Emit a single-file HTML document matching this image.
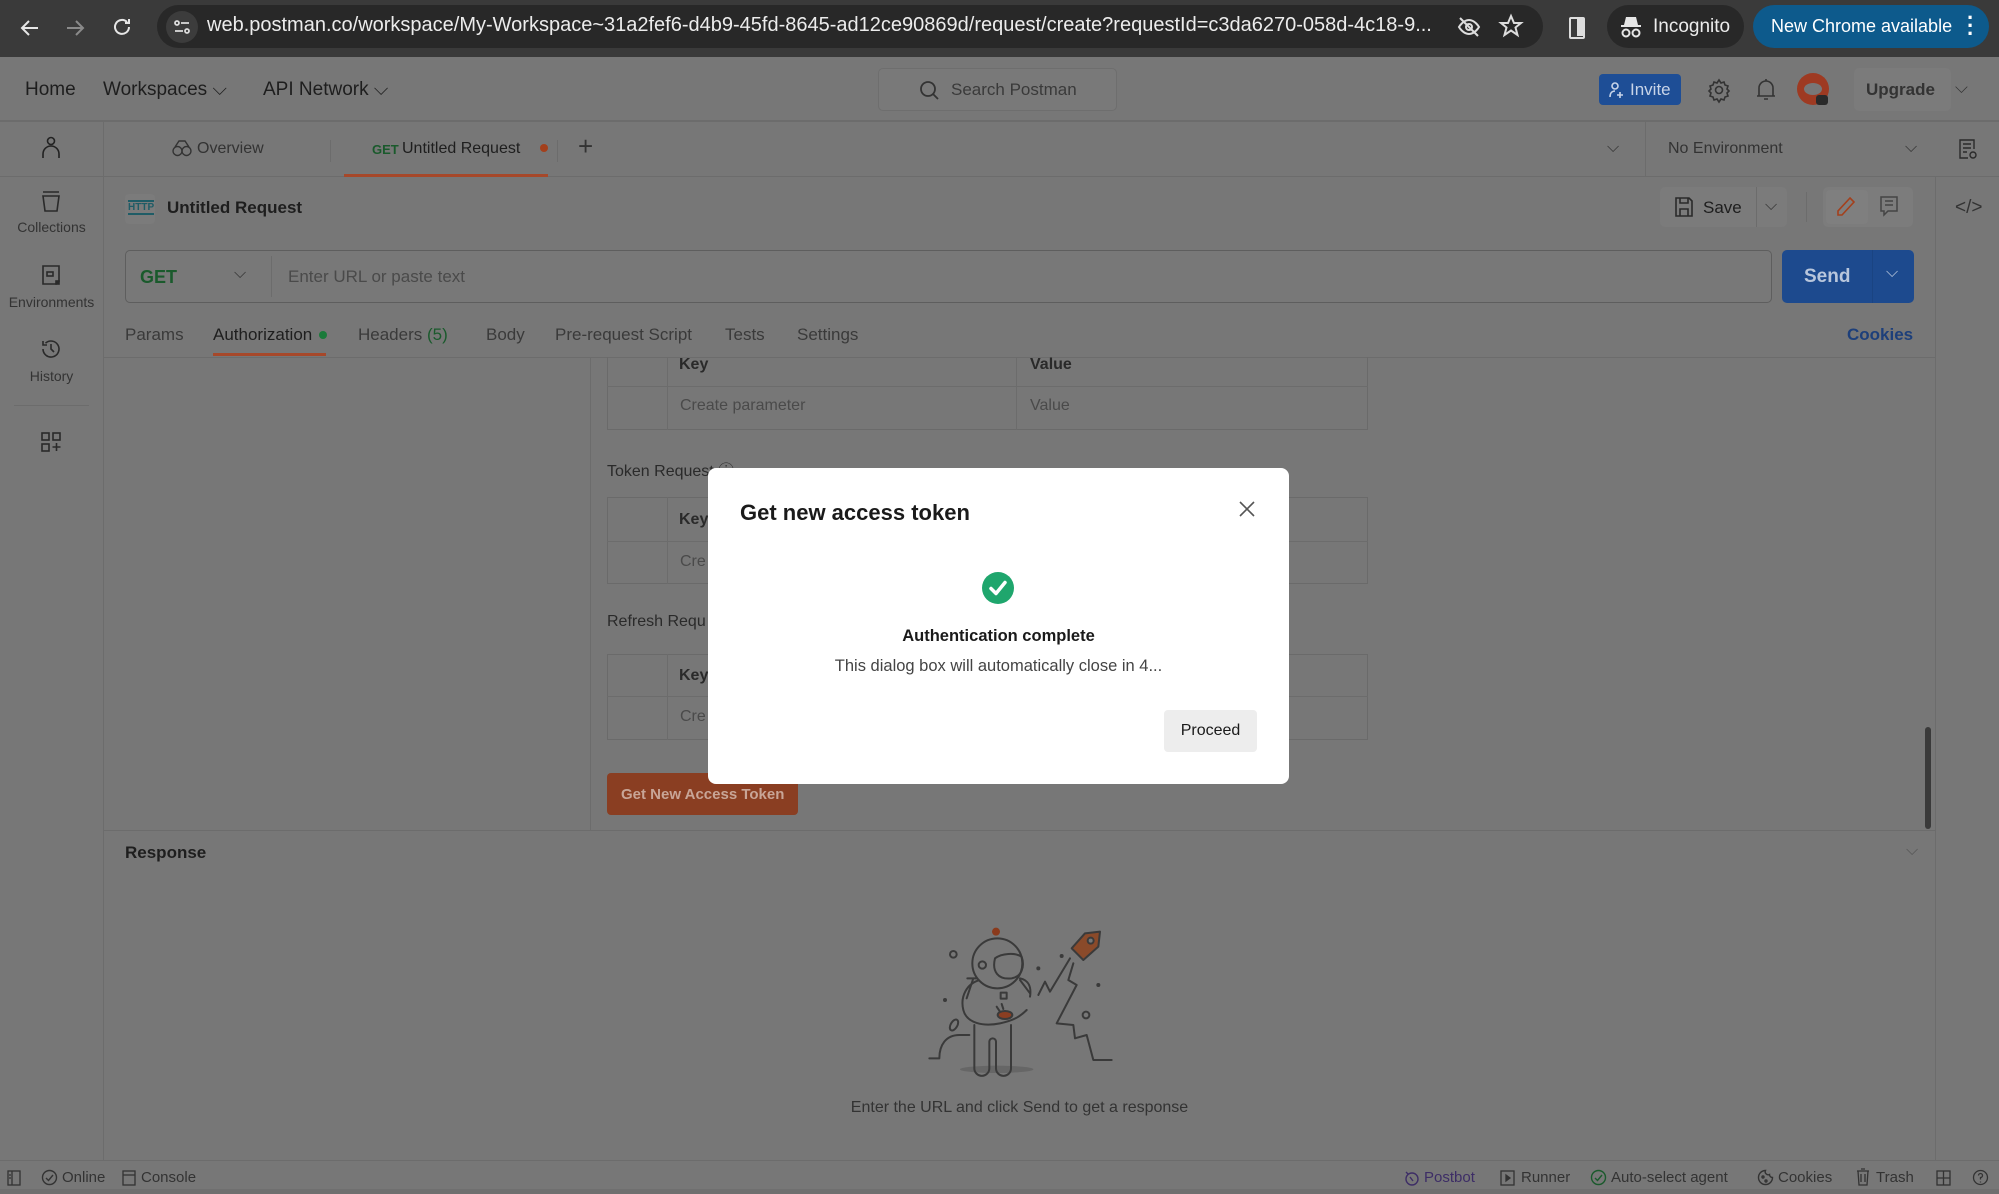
<!DOCTYPE html>
<html><head><meta charset="utf-8"><style>
*{box-sizing:border-box;margin:0;padding:0}
body{width:1999px;height:1194px;overflow:hidden;background:#777;font-family:"Liberation Sans",Arial,sans-serif;position:relative;color:#1e1e1e}
.a{position:absolute;white-space:nowrap}
.ln{position:absolute;background:#6c6c6c}
svg{position:absolute;overflow:visible}
.t{font-size:17px;color:#3a3a3a}
</style></head><body>
<!-- chrome bar -->
<div class="a" style="left:0;top:0;width:1999px;height:57px;background:#3a3a3a"></div>
<svg style="left:18px;top:16px" width="24" height="24" viewBox="0 0 24 24" fill="none" stroke="#e6e6e6" stroke-width="2"><path d="M20 12H5M11 5l-7 7 7 7"/></svg>
<svg style="left:63px;top:16px" width="24" height="24" viewBox="0 0 24 24" fill="none" stroke="#8a8a8a" stroke-width="2"><path d="M4 12h15M13 5l7 7-7 7"/></svg>
<svg style="left:110px;top:15px" width="24" height="24" viewBox="0 0 24 24" fill="none" stroke="#e6e6e6" stroke-width="2"><path d="M19 12a7 7 0 1 1-2-5M19 4v4h-4"/></svg>
<div class="a" style="left:157px;top:5px;width:1386px;height:43px;border-radius:22px;background:#282828"></div>
<div class="a" style="left:166px;top:11px;width:32px;height:32px;border-radius:16px;background:#3c3c3c"></div>
<svg style="left:173px;top:18px" width="18" height="18" viewBox="0 0 18 18" fill="none" stroke="#ddd" stroke-width="1.8"><circle cx="4" cy="5" r="2"/><path d="M8 5h8M2 13h8"/><circle cx="14" cy="13" r="2"/></svg>
<div class="a" style="left:207px;top:14px;font-size:20px;color:#ececec">web.postman.co/workspace/My-Workspace~31a2fef6-d4b9-45fd-8645-ad12ce90869d/request/create?requestId=c3da6270-058d-4c18-9...</div>
<svg style="left:1457px;top:15px" width="24" height="24" viewBox="0 0 24 24" fill="none" stroke="#ddd" stroke-width="2"><path d="M2 12s4-7 10-7 10 7 10 7-4 7-10 7S2 12 2 12z"/><circle cx="12" cy="12" r="3"/><path d="M3 3l18 18"/></svg>
<svg style="left:1499px;top:14px" width="24" height="24" viewBox="0 0 24 24" fill="none" stroke="#ddd" stroke-width="2"><path d="M12 2l3 7h7l-5.5 4.5 2 7.5-6.5-4.5-6.5 4.5 2-7.5L2 9h7z"/></svg>
<div class="a" style="left:1569px;top:17px;width:16px;height:22px;border:2.5px solid #ddd;border-radius:2px"><div style="position:absolute;right:0;top:0;width:6px;height:17px;background:#ddd"></div></div>
<div class="a" style="left:1607px;top:5px;width:137px;height:43px;border-radius:22px;background:#282828"></div>
<svg style="left:1620px;top:15px" width="22" height="24" viewBox="0 0 22 24" fill="#e6e6e6"><path d="M6 2h10l2 8H4z"/><rect x="1" y="10" width="20" height="2"/><circle cx="6" cy="18" r="3.5" fill="none" stroke="#e6e6e6" stroke-width="2"/><circle cx="16" cy="18" r="3.5" fill="none" stroke="#e6e6e6" stroke-width="2"/></svg>
<div class="a" style="left:1653px;top:16px;font-size:19px;color:#ececec">Incognito</div>
<div class="a" style="left:1753px;top:5px;width:236px;height:43px;border-radius:22px;background:#0d5a8c"></div>
<div class="a" style="left:1771px;top:16px;font-size:18px;color:#fff">New Chrome available</div>
<div class="a" style="left:1967px;top:14px;font-size:22px;color:#fff;font-weight:bold;line-height:8px;width:4px">·<br>·<br>·</div>

<!-- postman header -->
<div class="ln" style="left:0;top:120px;width:1999px;height:2px"></div>
<div class="a" style="left:25px;top:79px;font-size:19px;color:#1e1e1e">Home</div>
<div class="a" style="left:103px;top:79px;font-size:19px;color:#1e1e1e">Workspaces ⌵</div>
<div class="a" style="left:263px;top:79px;font-size:19px;color:#1e1e1e">API Network ⌵</div>
<div class="a" style="left:878px;top:68px;width:239px;height:43px;border:1px solid #6e6e6e;border-radius:5px;background:#797979"></div>
<svg style="left:918px;top:79px" width="22" height="22" viewBox="0 0 22 22" fill="none" stroke="#333" stroke-width="1.8"><circle cx="10" cy="10" r="7"/><path d="M15 15l5 5"/></svg>
<div class="a" style="left:951px;top:80px;font-size:17px;color:#3a3a3a">Search Postman</div>
<div class="a" style="left:1599px;top:74px;width:82px;height:31px;border-radius:4px;background:#1e4e96"></div>
<svg style="left:1608px;top:81px" width="18" height="18" viewBox="0 0 18 18" fill="none" stroke="#c8d4e8" stroke-width="1.6"><circle cx="7" cy="5" r="3"/><path d="M2 16c0-4 2-6 5-6M12 11v6M9 14h6"/></svg>
<div class="a" style="left:1630px;top:80px;font-size:17px;color:#c8d4e8">Invite</div>
<svg style="left:1707px;top:78px" width="24" height="24" viewBox="0 0 24 24" fill="none" stroke="#333" stroke-width="1.6"><circle cx="12" cy="12" r="3.5"/><path d="M12 2l2 3 3-1 1 3 3 1-1 3 2 2-2 2 1 3-3 1-1 3-3-1-2 3-2-3-3 1-1-3-3-1 1-3-2-2 2-2-1-3 3-1 1-3 3 1z"/></svg>
<svg style="left:1755px;top:78px" width="22" height="24" viewBox="0 0 22 24" fill="none" stroke="#333" stroke-width="1.6"><path d="M4 18V10a7 7 0 0 1 14 0v8H4zM2 18h18M9 21h4M11 3V1"/></svg>
<div class="a" style="left:1797px;top:73px;width:32px;height:32px;border-radius:16px;background:#9e3a22"></div>
<div class="a" style="left:1804px;top:83px;width:18px;height:12px;border-radius:50%;background:#777"></div>
<div class="a" style="left:1816px;top:95px;width:12px;height:10px;border-radius:3px;background:#2a2a2a"></div>
<div class="a" style="left:1854px;top:68px;width:97px;height:43px;border-radius:5px;background:#7b7b7b"></div>
<div class="a" style="left:1866px;top:80px;font-size:17px;color:#333;font-weight:bold">Upgrade</div>
<div class="a" style="left:1955px;top:78px;font-size:17px;color:#333">⌵</div>

<!-- sidebar -->
<div class="ln" style="left:103px;top:122px;width:1px;height:1038px"></div>
<svg style="left:40px;top:136px" width="22" height="24" viewBox="0 0 22 24" fill="none" stroke="#222" stroke-width="1.6"><circle cx="11" cy="5" r="3.5"/><path d="M3 22v-4a8 8 0 0 1 16 0v4"/></svg>
<div class="ln" style="left:0;top:176px;width:103px;height:1px"></div>
<svg style="left:40px;top:190px" width="22" height="24" viewBox="0 0 22 24" fill="none" stroke="#2a2a2a" stroke-width="1.6"><path d="M3 2h16M3 6h16l-2 15H5z"/></svg>
<div class="a" style="left:0;top:219px;width:103px;text-align:center;font-size:14px;color:#333">Collections</div>
<svg style="left:41px;top:264px" width="20" height="22" viewBox="0 0 20 22" fill="none" stroke="#2a2a2a" stroke-width="1.6"><path d="M16 20H2V2h16v16"/><rect x="6" y="8" width="6" height="4"/><rect x="15" y="17" width="3" height="3" fill="#2a2a2a"/></svg>
<div class="a" style="left:0;top:294px;width:103px;text-align:center;font-size:14px;color:#333">Environments</div>
<svg style="left:40px;top:338px" width="22" height="22" viewBox="0 0 22 22" fill="none" stroke="#2a2a2a" stroke-width="1.6"><path d="M3 11a8 8 0 1 0 2.5-5.8M3 3v4h4M11 6v5l3 3"/></svg>
<div class="a" style="left:0;top:368px;width:103px;text-align:center;font-size:14px;color:#333">History</div>
<div class="ln" style="left:14px;top:405px;width:75px;height:1px"></div>
<svg style="left:41px;top:432px" width="20" height="20" viewBox="0 0 20 20" fill="none" stroke="#2a2a2a" stroke-width="1.6"><rect x="1" y="1" width="7" height="7"/><rect x="12" y="1" width="7" height="7"/><rect x="1" y="12" width="7" height="7"/><path d="M15.5 11v8M11.5 15h8"/></svg>

<!-- tabs row -->
<div class="ln" style="left:103px;top:176px;width:1896px;height:1px"></div>
<svg style="left:172px;top:139px" width="20" height="18" viewBox="0 0 20 18" fill="none" stroke="#333" stroke-width="1.4"><circle cx="5.5" cy="12" r="4.5"/><circle cx="14.5" cy="12" r="4.5"/><path d="M3 8l4-6h6l4 6"/></svg>
<div class="a" style="left:197px;top:140px;font-size:16px;color:#333">Overview</div>
<div class="ln" style="left:330px;top:140px;width:1px;height:22px"></div>
<div class="a" style="left:372px;top:142px;font-size:13px;color:#1a5a2c;font-weight:bold">GET</div>
<div class="a" style="left:402px;top:140px;font-size:16px;color:#1e1e1e">Untitled Request</div>
<div class="a" style="left:540px;top:144px;width:8px;height:8px;border-radius:4px;background:#a3401c"></div>
<div class="ln" style="left:557px;top:140px;width:1px;height:22px"></div>
<div class="a" style="left:578px;top:131px;font-size:26px;color:#333;font-weight:300">+</div>
<div class="a" style="left:344px;top:174px;width:204px;height:3px;background:#a6482a"></div>
<div class="a" style="left:1607px;top:139px;font-size:16px;color:#333">⌵</div>
<div class="ln" style="left:1645px;top:122px;width:1px;height:54px"></div>
<div class="a" style="left:1668px;top:140px;font-size:16px;color:#333">No Environment</div>
<div class="a" style="left:1905px;top:139px;font-size:16px;color:#333">⌵</div>
<svg style="left:1958px;top:138px" width="20" height="22" viewBox="0 0 20 22" fill="none" stroke="#2a2a2a" stroke-width="1.4"><path d="M10 20H2V2h14v9M5 6h8M5 10h8M5 14h4"/><circle cx="15" cy="17" r="3"/></svg>

<!-- right panel divider -->
<div class="ln" style="left:1935px;top:176px;width:1px;height:984px"></div>
<div class="a" style="left:1955px;top:197px;font-size:19px;color:#333">&lt;/&gt;</div>

<!-- request name -->
<div class="a" style="left:125px;top:194px;width:30px;height:30px;border-radius:4px;background:#7b7b7b"></div>
<div class="a" style="left:128px;top:200px;font-size:10px;color:#1f5c66;font-weight:bold;border-top:2px solid #1f5c66;border-bottom:2px solid #1f5c66;line-height:11px">HTTP</div>
<div class="a" style="left:167px;top:198px;font-size:17px;color:#1e1e1e;font-weight:bold">Untitled Request</div>
<div class="a" style="left:1660px;top:187px;width:127px;height:40px;border-radius:5px;background:#7b7b7b"></div>
<div class="ln" style="left:1756px;top:187px;width:1px;height:40px"></div>
<svg style="left:1674px;top:196px" width="20" height="22" viewBox="0 0 20 22" fill="none" stroke="#2a2a2a" stroke-width="1.6"><path d="M2 2h13l3 3v15H2zM6 2v5h8V2M6 20v-7h8v7"/></svg>
<div class="a" style="left:1703px;top:198px;font-size:17px;color:#1e1e1e">Save</div>
<div class="a" style="left:1765px;top:197px;font-size:16px;color:#333">⌵</div>
<div class="ln" style="left:1806px;top:192px;width:1px;height:30px"></div>
<div class="a" style="left:1823px;top:187px;width:90px;height:40px;border-radius:5px;background:#7c7c7c"></div>
<div class="a" style="left:1826px;top:190px;width:42px;height:34px;border-radius:4px;background:#7f7f7f"></div>
<svg style="left:1836px;top:196px" width="20" height="22" viewBox="0 0 20 22" fill="none" stroke="#a3401c" stroke-width="1.6"><path d="M14 2l4 4L6 19H2v-4z"/></svg>
<svg style="left:1880px;top:196px" width="18" height="22" viewBox="0 0 18 22" fill="none" stroke="#444" stroke-width="1.5"><path d="M1 1h16v14H8l-4 4v-4H1zM5 5h8M5 9h8"/></svg>

<!-- url bar -->
<div class="a" style="left:125px;top:250px;width:1647px;height:53px;border:1.5px solid #5e5e5e;border-radius:5px;background:#787878"></div>
<div class="ln" style="left:271px;top:256px;width:1px;height:41px"></div>
<div class="a" style="left:140px;top:267px;font-size:18px;color:#1a5a2c;font-weight:bold">GET</div>
<div class="a" style="left:234px;top:265px;font-size:16px;color:#333">⌵</div>
<div class="a" style="left:288px;top:267px;font-size:17px;color:#4a4a4a">Enter URL or paste text</div>
<div class="a" style="left:1782px;top:250px;width:132px;height:53px;border-radius:5px;background:#1d4a8e"></div>
<div class="a" style="left:1872px;top:250px;width:1px;height:53px;background:#1a4482"></div>
<div class="a" style="left:1804px;top:266px;font-size:19px;color:#b8c6dc;font-weight:bold">Send</div>
<div class="a" style="left:1886px;top:264px;font-size:16px;color:#b8c6dc">⌵</div>

<!-- request tabs -->
<div class="a t" style="left:125px;top:325px">Params</div>
<div class="a t" style="left:213px;top:325px;color:#1e1e1e">Authorization</div>
<div class="a" style="left:319px;top:331px;width:8px;height:8px;border-radius:4px;background:#1a7a3a"></div>
<div class="a t" style="left:358px;top:325px">Headers <span style="color:#1a5a2c">(5)</span></div>
<div class="a t" style="left:486px;top:325px">Body</div>
<div class="a t" style="left:555px;top:325px">Pre-request Script</div>
<div class="a t" style="left:725px;top:325px">Tests</div>
<div class="a t" style="left:797px;top:325px">Settings</div>
<div class="a" style="left:1847px;top:325px;font-size:17px;color:#1d3f7a;font-weight:bold">Cookies</div>
<div class="a" style="left:213px;top:353px;width:113px;height:3px;background:#a6482a"></div>
<div class="ln" style="left:103px;top:357px;width:1832px;height:1px"></div>

<!-- auth body -->
<div class="ln" style="left:590px;top:357px;width:1px;height:473px"></div>
<div class="a" style="left:607px;top:357px;width:761px;height:73px;border:1px solid #6a6a6a;border-top:none"></div>
<div class="ln" style="left:667px;top:357px;width:1px;height:73px"></div>
<div class="ln" style="left:1016px;top:357px;width:1px;height:73px"></div>
<div class="ln" style="left:607px;top:386px;width:761px;height:1px"></div>
<div class="a" style="left:679px;top:356px;font-size:16px;color:#2a2a2a;font-weight:bold">Key</div>
<div class="a" style="left:1030px;top:356px;font-size:16px;color:#2a2a2a;font-weight:bold">Value</div>
<div class="a" style="left:680px;top:397px;font-size:16px;color:#4a4a4a">Create parameter</div>
<div class="a" style="left:1030px;top:397px;font-size:16px;color:#4a4a4a">Value</div>

<div class="a" style="left:607px;top:457px;font-size:16px;color:#2a2a2a">Token Request ⓘ</div>
<div class="a" style="left:607px;top:497px;width:761px;height:87px;border:1px solid #6a6a6a"></div>
<div class="ln" style="left:667px;top:497px;width:1px;height:87px"></div>
<div class="ln" style="left:607px;top:541px;width:761px;height:1px"></div>
<div class="a" style="left:679px;top:511px;font-size:16px;color:#2a2a2a;font-weight:bold">Key</div>
<div class="a" style="left:680px;top:553px;font-size:16px;color:#4a4a4a">Cre</div>

<div class="a" style="left:607px;top:613px;font-size:16px;color:#2a2a2a">Refresh Requ</div>
<div class="a" style="left:607px;top:654px;width:761px;height:86px;border:1px solid #6a6a6a"></div>
<div class="ln" style="left:667px;top:654px;width:1px;height:86px"></div>
<div class="ln" style="left:607px;top:696px;width:761px;height:1px"></div>
<div class="a" style="left:679px;top:667px;font-size:16px;color:#2a2a2a;font-weight:bold">Key</div>
<div class="a" style="left:680px;top:708px;font-size:16px;color:#4a4a4a">Cre</div>

<div class="a" style="left:607px;top:773px;width:191px;height:42px;border-radius:4px;background:#8a3e22"></div>
<div class="a" style="left:621px;top:786px;font-size:15px;color:#c8a597;font-weight:bold">Get New Access Token</div>
<div class="a" style="left:1925px;top:727px;width:6px;height:102px;border-radius:3px;background:#3a3a3a"></div>
<div class="ln" style="left:103px;top:830px;width:1832px;height:1px"></div>

<!-- response -->
<div class="a" style="left:125px;top:843px;font-size:17px;color:#1e1e1e;font-weight:bold">Response</div>
<div class="a" style="left:1906px;top:842px;font-size:16px;color:#555">⌵</div>
<svg style="left:880px;top:900px" width="260" height="200" viewBox="0 0 780 600" fill="none" stroke="#3a3a3a" stroke-width="6" stroke-linecap="round" stroke-linejoin="round">
<ellipse cx="350" cy="508" rx="110" ry="11" fill="#666" stroke="none"/>
<circle cx="348" cy="95" r="12" fill="#8a3a1c" stroke="none"/>
<path d="M262 235h30M280 235l-20 60M420 240l30 40"/>
<path d="M300 240c-40 10-60 50-50 90 10 40 60 50 110 40 40-8 60-20 80-40M450 290c5-30-5-50-30-55"/>
<path d="M283 375v130a20 20 0 0 0 45 0v-80a10 10 0 0 1 20 0v80a20 20 0 0 0 45 0v-130"/>
<circle cx="352" cy="190" r="75" fill="#777"/>
<path d="M345 175c20-15 60-18 80 -5 10 30 0 60-30 65-40 5-60-20-50-60z"/>
<circle cx="307" cy="195" r="11"/>
<rect x="362" y="278" width="18" height="18"/>
<path d="M350 320l10 15M365 312l5 15"/>
<ellipse cx="375" cy="345" rx="22" ry="12" fill="#8a3e22"/>
<path d="M148 475h30c0-40 20-70 60-70h30"/>
<path d="M475 285l20-40 15 30 60-100"/>
<path d="M580 190l-15 50 25 15-60 115 50 5 5 40 35-10 20 75h55"/>
<path d="M575 145l40-45 45-5-5 45-45 40z" fill="#8a4a2a"/>
<circle cx="632" cy="122" r="9" fill="#777"/>
<circle cx="220" cy="163" r="10"/><circle cx="618" cy="345" r="10"/>
<ellipse cx="222" cy="375" rx="10" ry="18" transform="rotate(30 222 375)"/>
<circle cx="475" cy="205" r="3" fill="#3a3a3a"/><circle cx="545" cy="168" r="3" fill="#3a3a3a"/><circle cx="655" cy="255" r="3" fill="#3a3a3a"/><circle cx="195" cy="300" r="3" fill="#3a3a3a"/>
</svg>
<div class="a" style="left:0;top:1099px;width:2039px;text-align:center;font-size:16px;color:#333">Enter the URL and click Send to get a response</div>

<!-- status bar -->
<div class="ln" style="left:0;top:1160px;width:1999px;height:1px"></div>
<div class="a" style="left:0;top:1189px;width:1999px;height:5px;background:#6f6f6f"></div>
<svg style="left:7px;top:1170px" width="14" height="16" viewBox="0 0 14 16" fill="none" stroke="#333" stroke-width="1.3"><rect x="1" y="1" width="12" height="14"/><path d="M5 1v14M2 5h2M2 8h2"/></svg>
<svg style="left:41px;top:1169px" width="17" height="17" viewBox="0 0 17 17" fill="none" stroke="#333" stroke-width="1.4"><circle cx="8.5" cy="8.5" r="7"/><path d="M5 9l2.5 2.5L12 6"/></svg>
<div class="a" style="left:62px;top:1169px;font-size:15px;color:#333">Online</div>
<svg style="left:122px;top:1170px" width="14" height="16" viewBox="0 0 14 16" fill="none" stroke="#333" stroke-width="1.3"><rect x="1" y="1" width="12" height="14"/><path d="M1 5h12"/></svg>
<div class="a" style="left:141px;top:1169px;font-size:15px;color:#333">Console</div>
<svg style="left:1403px;top:1169px" width="17" height="17" viewBox="0 0 17 17" fill="none" stroke="#3d2d66" stroke-width="1.4"><circle cx="9" cy="10" r="6"/><path d="M7 8l3 4M3 3l2 2"/></svg>
<div class="a" style="left:1424px;top:1169px;font-size:15px;color:#3d2d66">Postbot</div>
<svg style="left:1500px;top:1170px" width="15" height="16" viewBox="0 0 15 16" fill="none" stroke="#333" stroke-width="1.3"><rect x="1" y="1" width="13" height="14"/><path d="M6 5v6l4-3z" fill="#333"/></svg>
<div class="a" style="left:1521px;top:1169px;font-size:15px;color:#333">Runner</div>
<svg style="left:1590px;top:1169px" width="17" height="17" viewBox="0 0 17 17" fill="none" stroke="#1a5a2c" stroke-width="1.4"><circle cx="8.5" cy="8.5" r="7"/><path d="M5 9l2.5 2.5L12 6"/></svg>
<div class="a" style="left:1611px;top:1169px;font-size:15px;color:#333">Auto-select agent</div>
<svg style="left:1757px;top:1169px" width="17" height="17" viewBox="0 0 17 17" fill="none" stroke="#333" stroke-width="1.4"><path d="M8.5 1.5a7 7 0 1 0 7 7 3 3 0 0 1-3-3 3 3 0 0 1-4-4z"/><circle cx="6" cy="8" r="1"/><circle cx="9" cy="12" r="1"/></svg>
<div class="a" style="left:1778px;top:1169px;font-size:15px;color:#333">Cookies</div>
<svg style="left:1856px;top:1168px" width="14" height="18" viewBox="0 0 14 18" fill="none" stroke="#333" stroke-width="1.3"><path d="M1 3h12M5 1h4M2 3l1 14h8l1-14M5 6v8M9 6v8"/></svg>
<div class="a" style="left:1876px;top:1169px;font-size:15px;color:#333">Trash</div>
<svg style="left:1936px;top:1170px" width="15" height="16" viewBox="0 0 15 16" fill="none" stroke="#333" stroke-width="1.3"><rect x="1" y="1" width="13" height="14"/><path d="M7.5 1v14M1 8h13"/></svg>
<svg style="left:1972px;top:1169px" width="17" height="17" viewBox="0 0 17 17" fill="none" stroke="#333" stroke-width="1.3"><circle cx="8.5" cy="8.5" r="7"/><path d="M6.5 6.5a2 2 0 1 1 2 2v2M8.5 12.5v1"/></svg>

<!-- modal -->
<div class="a" style="left:708px;top:468px;width:581px;height:316px;background:#fff;border-radius:8px"></div>
<div class="a" style="left:740px;top:500px;font-size:22px;color:#1a1a1a;font-weight:bold">Get new access token</div>
<svg style="left:1239px;top:501px" width="16" height="16" viewBox="0 0 16 16" stroke="#555" stroke-width="1.6"><path d="M1 1l14 14M15 1L1 15"/></svg>
<svg style="left:981px;top:571px" width="34" height="34" viewBox="0 0 34 34"><circle cx="17" cy="17" r="16" fill="#1fa66d"/><path d="M10 17.5l5 5 9-11" fill="none" stroke="#fff" stroke-width="3.5" stroke-linecap="round" stroke-linejoin="round"/></svg>
<div class="a" style="left:708px;top:627px;width:581px;text-align:center;font-size:16.5px;color:#1a1a1a;font-weight:bold">Authentication complete</div>
<div class="a" style="left:708px;top:657px;width:581px;text-align:center;font-size:16.5px;color:#444">This dialog box will automatically close in 4...</div>
<div class="a" style="left:1164px;top:710px;width:93px;height:42px;border-radius:4px;background:#ededed"></div>
<div class="a" style="left:1164px;top:722px;width:93px;text-align:center;font-size:16px;color:#1a1a1a">Proceed</div>
</body></html>
